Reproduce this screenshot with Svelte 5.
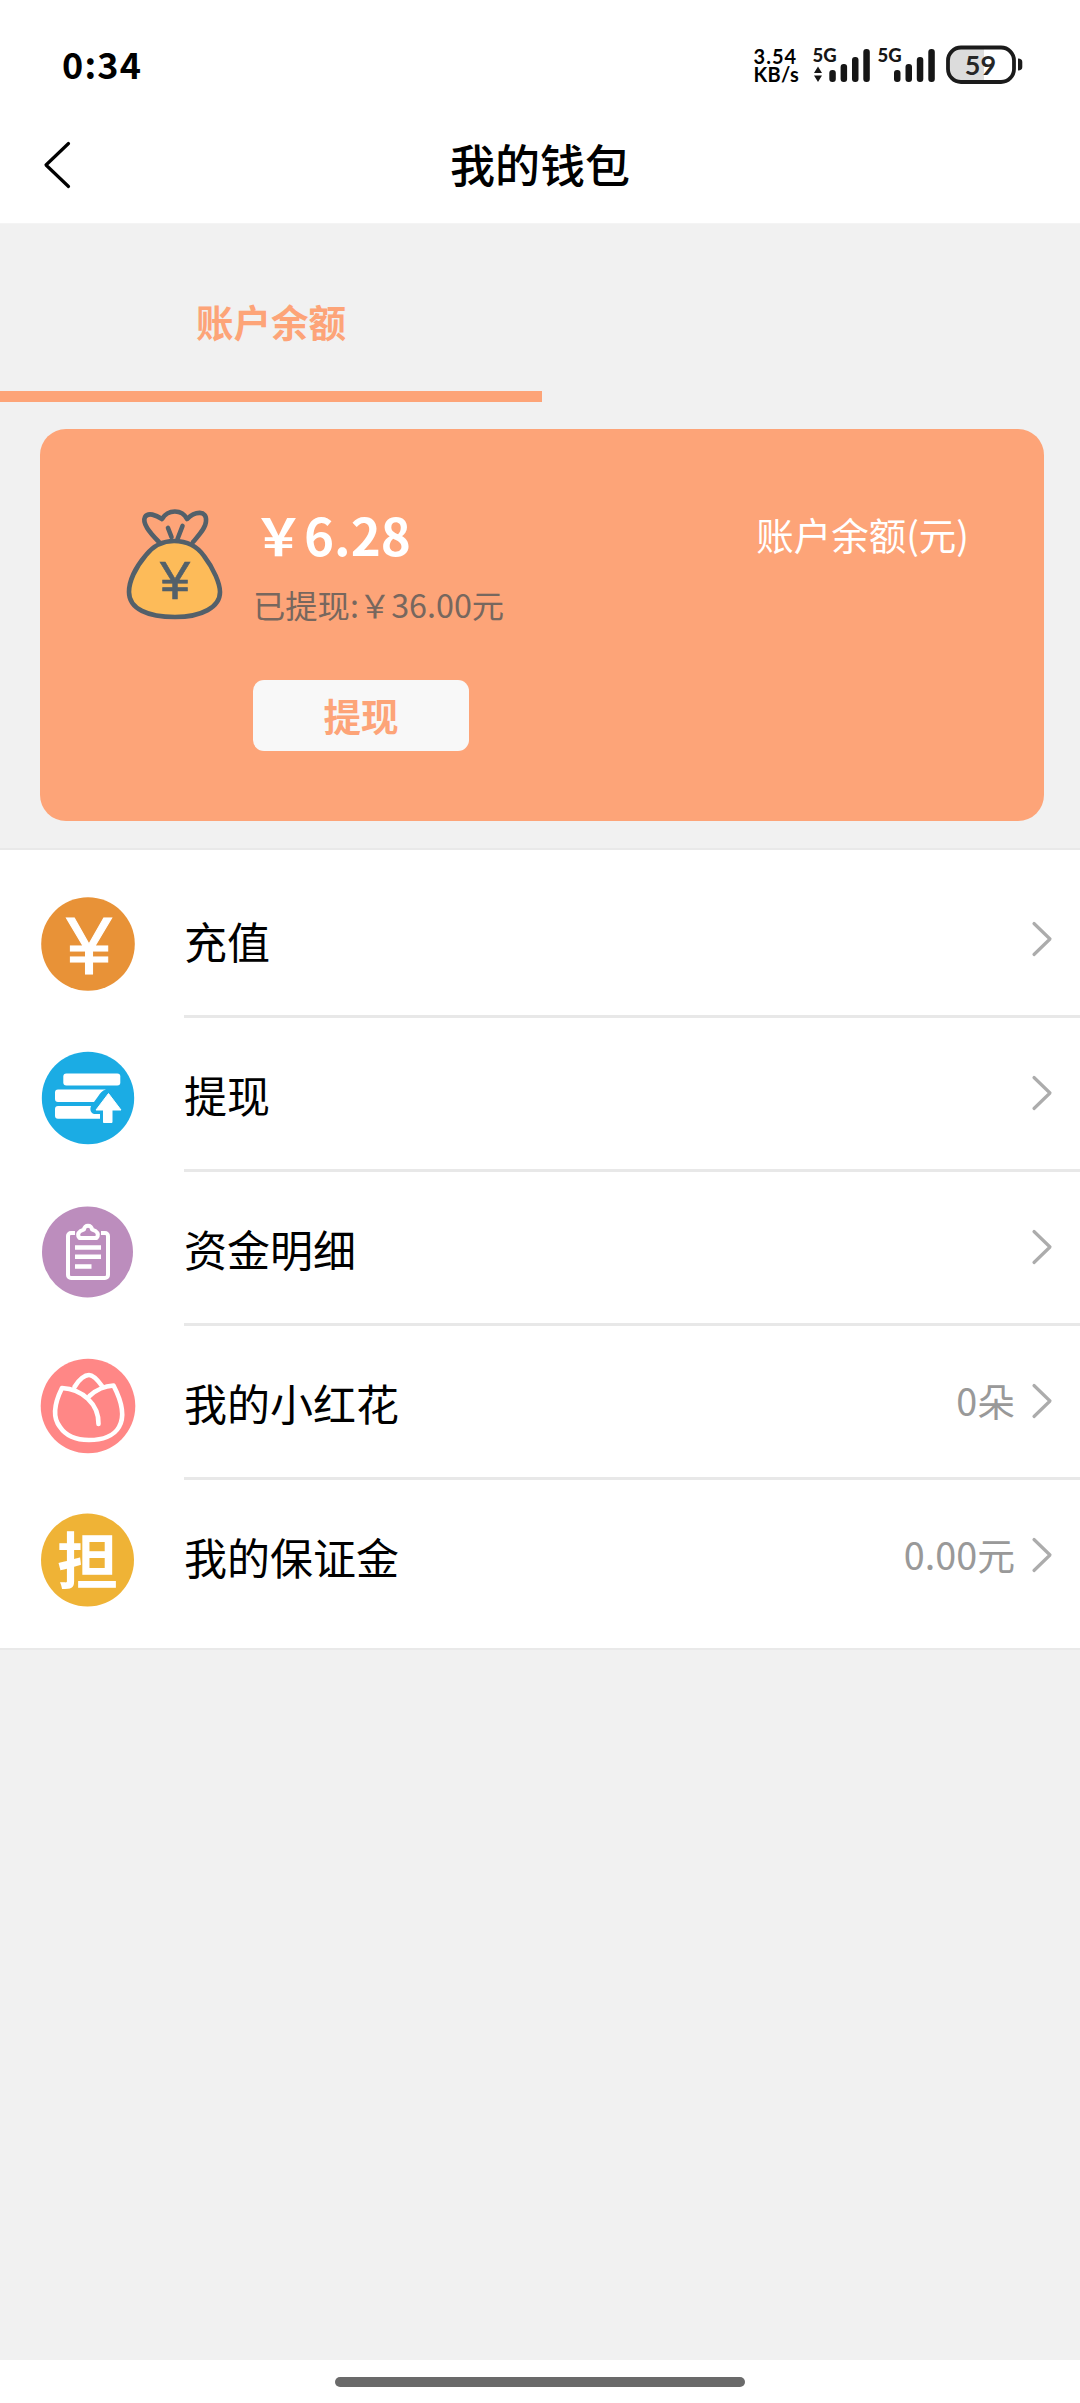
<script>

let balance = '6.28'
let withdrawn = '36.00'

let menu = [
  { icon: 'recharge', name: '充值', value: '' },
  { icon: 'withdraw', name: '提现', value: '' },
  { icon: 'detail', name: '资金明细', value: '' },
  { icon: 'flower', name: '我的小红花', value: '0朵' },
  { icon: 'deposit', name: '我的保证金', value: '0.00元' }
]

</script>

<div class="page">

  <!--  status bar   -->

  <div class="status">
    <div class="time">0:34</div>
    <div class="speed">
      <span class="rate">3.54</span>
      <span>KB/s</span>
    </div>
    <svg class="signals" width="124" height="44" viewBox="0 -8 124 44">
      <g fill="#161616">
        <path d="M6 19.5l4 6.5H2zM2 28.5h8L6 35z" />
        <rect x="17.3" y="23" width="6.5" height="12" rx="3" />
        <rect x="28.6" y="17" width="6.5" height="18" rx="3" />
        <rect x="40" y="10" width="6.5" height="25" rx="3" />
        <rect x="51.3" y="2" width="6.5" height="33" rx="3" />
        <rect x="82" y="23" width="6.5" height="12" rx="3" />
        <rect x="93.5" y="17" width="6.5" height="18" rx="3" />
        <rect x="104.8" y="10" width="6.5" height="25" rx="3" />
        <rect x="116.3" y="2" width="6.5" height="33" rx="3" />
        <text class="net" x="0.5" y="15">5G</text>
        <text class="net" x="65.5" y="15">5G</text>
      </g>
    </svg>
    <svg class="battery" width="78" height="40" viewBox="0 0 78 40">
      <path d="M14 4h24v32H14A10 10 0 0 1 4 26V14A10 10 0 0 1 14 4z" fill="#dcdcdc" />
      <rect x="2" y="2.500" width="66" height="34.500" rx="13" fill="none" stroke="#1b1b1b" stroke-width="3.8" />
      <path d="M72 13.5c3 0 4.300 1.500 4.300 3.500v5c0 2-1.300 3.500-4.300 3.500z" fill="#1b1b1b" />
      <text class="level" x="34.5" y="30" text-anchor="middle">59</text>
    </svg>
  </div>

  <!--  title bar   -->

  <div class="header">
    <svg class="back" width="30" height="50" viewBox="0 0 30 50">
      <path d="M25.500 3.500L3 25l22.500 21.500" fill="none" stroke="#000" stroke-width="3.200" stroke-linecap="round" stroke-linejoin="round" />
    </svg>
    <h1>我的钱包</h1>
  </div>

  <!--  balance   -->

  <div class="tabs">
    <div class="tab">账户余额</div>
  </div>

  <div class="card">
    <svg class="bag" width="100" height="114" viewBox="0 0 100 114">
      <g stroke="#53606a" stroke-width="4.600" stroke-linecap="round" stroke-linejoin="round">
        <path d="M34 34C24 24 17 15 20 9C23 4 31 7 37 11C43 1 57 1 62 11C70 3 82 2 81 13C81 20 73 28 68 34" fill="none" />
        <path d="M49 33C38 33 29 37 21 47C10 60 4 74 4 84C4 101 23 109 50 109C77 109 95 99 95 84C95 76 89 61 79 48C72 38 62 33 49 33Z" fill="#fdbb59" />
        <path d="M43 20l3.500 9M57.500 18l-5 13" fill="none" />
      </g>
      <text class="bag-yen" x="50" y="91" text-anchor="middle">¥</text>
    </svg>
    <div class="info">
      <div class="amount">￥{balance}</div>
      <div class="withdrawn">已提现:￥{withdrawn}元</div>
      <button class="cash">提现</button>
    </div>
    <div class="label">账户余额(元)</div>
  </div>

  <!--  menu   -->

  <div class="menu">
    {#each menu as item}
      <div class="row">
        <svg class="icon" width="96" height="96" viewBox="0 0 96 96">
          {#if item.icon === 'recharge'}
            <circle cx="48" cy="48" r="46.800" fill="#e89237" />
            <text class="yen" x="49" y="78" text-anchor="middle">¥</text>
          {:else if item.icon === 'withdraw'}
            <circle cx="48" cy="48" r="46.200" fill="#1bace4" />
            <g fill="#fff">
              <rect x="23.300" y="23.500" width="57" height="12" rx="3" />
              <path d="M18 39.500h48c-4 1-6 4-8 7l-4 5.500H18a3 3 0 0 1-3-3v-6.500a3 3 0 0 1 3-3z" />
              <path d="M18 56h33c-1.500 4 0 7 3 8h6v4.700H18a3 3 0 0 1-3-3V59a3 3 0 0 1 3-3z" />
              <path d="M68.500 43.500L81 60h-9v12.500h-8.500V60h-7.500z" stroke="#fff" stroke-width="1" stroke-linejoin="round" />
            </g>
          {:else if item.icon === 'detail'}
            <circle cx="47.500" cy="48" r="45.500" fill="#bc8dbd" />
            <g fill="none" stroke="#fff" stroke-width="4" stroke-linejoin="round">
              <path d="M35 29h-4a3 3 0 0 0-3 3v39a3 3 0 0 0 3 3h34a3 3 0 0 0 3-3V32a3 3 0 0 0-3-3h-4" />
              <path d="M39.500 34h17q3-4-1-7l-3.500-1.500c0-5-8-5-8 0L40.500 27q-4 3-1 7z" />
              <path d="M35 43.500h26M35 52.800h26M35 62.500h16.500" stroke-width="4.400" />
            </g>
          {:else if item.icon === 'flower'}
            <circle cx="48" cy="48" r="47.300" fill="#ff8786" />
            <g fill="none" stroke="#fff" stroke-width="4.600" stroke-linecap="round" stroke-linejoin="round">
              <path d="M58.500 66C59 46 42 31 22 30C14 46 12 59 20 69C26 78 36 82 49 82C62 82 74 78 79 69C86 57 80 40 73.500 27.500C65 28 56 32 49.500 38" />
              <path d="M34.500 29C39 21 45 17 49 17C53 17 57 21 62 28" />
            </g>
          {:else}
            <circle cx="47.500" cy="48" r="46.500" fill="#efb336" />
            <text class="dan" x="47.500" y="72" text-anchor="middle">担</text>
          {/if}
        </svg>
        <div class="line">
          <div class="name">{item.name}</div>
          <div class="value">{item.value}</div>
          <svg class="arrow" width="22" height="38" viewBox="0 0 22 38">
            <path d="M3 3.500L19 19L3 34.500" fill="none" stroke="#acacac" stroke-width="3.200" stroke-linecap="round" stroke-linejoin="round" />
          </svg>
        </div>
      </div>
    {/each}
  </div>

  <div class="nav"><div class="pill"></div></div>

</div>

<style>

  :global(body) {
    margin: 0;
  }

  .page {
    display: flex;
    flex-direction: column;
    width: 1080px;
    height: 2403px;
    background: #f1f1f1;
    font-family: "Noto Sans CJK SC", sans-serif;
    color: #000;
    overflow: hidden;
  }

  .status {
    display: flex;
    align-items: flex-start;
    height: 110px;
    padding: 45px 56px 0 62px;
    box-sizing: border-box;
    background: #fff;
  }

  .time {
    margin-right: auto;
    font-size: 36px;
    font-weight: 700;
    line-height: 36px;
    letter-spacing: 1.2px;
  }

  .speed {
    display: flex;
    flex-direction: column;
    margin: 2px 13px 0 0;
    font-family: Lato, sans-serif;
    font-size: 20px;
    font-weight: 700;
    line-height: 18px;
    letter-spacing: 0.3px;
  }

  .rate {
    letter-spacing: 1px;
  }

  .signals {
    margin: -6px 10px 0 0;
  }

  .net {
    font-family: Lato, sans-serif;
    font-size: 18.5px;
    font-weight: 900;
  }

  .level {
    font-family: Lato, sans-serif;
    font-size: 27px;
    font-weight: 700;
    fill: #262626;
  }

  .header {
    display: grid;
    grid-template-columns: 73px 1fr 73px;
    align-items: center;
    height: 114px;
    padding-bottom: 4px;
    background: #fff;
    border-bottom: 1px solid #f4f4f4;
    box-sizing: border-box;
  }

  .back {
    justify-self: end;
  }

  h1 {
    margin: 0 0 2px;
    text-align: center;
    font-size: 45px;
    font-weight: 500;
    line-height: 60px;
  }

  .tabs {
    display: flex;
    height: 178px;
  }

  .tab {
    width: 542px;
    border-bottom: 11px solid #fda478;
    box-sizing: border-box;
    line-height: 193px;
    text-align: center;
    font-size: 37.5px;
    font-weight: 700;
    color: #fda478;
  }

  .card {
    display: flex;
    align-items: flex-start;
    width: 1004px;
    height: 392px;
    margin: 27px 0 27px 40px;
    padding: 79px 75px 0 85px;
    box-sizing: border-box;
    border-radius: 26px;
    background: #fda478;
  }

  .info {
    margin-left: 28px;
  }

  .amount {
    height: 60px;
    line-height: 52px;
    font-size: 51px;
    font-weight: 700;
    color: #fff;
  }

  .withdrawn {
    height: 112px;
    line-height: 73px;
    font-size: 32.3px;
    color: #77675e;
  }

  .cash {
    display: block;
    width: 216px;
    height: 71px;
    padding: 0 0 3px;
    border: none;
    border-radius: 11px;
    background: #f8f8f8;
    font-family: inherit;
    font-size: 37.5px;
    font-weight: 700;
    color: #fda478;
  }

  .label {
    margin-left: auto;
    line-height: 52px;
    font-size: 37.5px;
    color: #fff;
  }

  .bag-yen {
    font-family: "Liberation Sans", sans-serif;
    font-size: 54px;
    fill: #53606a;
    stroke: #53606a;
    stroke-width: 0.6px;
  }

  .menu {
    padding: 14px 0;
    background: #fff;
    border-top: 2px solid #e9e9e9;
    border-bottom: 2px solid #e9e9e9;
  }

  .row {
    display: flex;
    height: 154px;
  }

  .icon {
    margin: 31.5px 48.5px 0 39.5px;
  }

  .yen {
    font-family: "Liberation Sans", sans-serif;
    font-size: 81px;
    fill: #fff;
    stroke: #fff;
    stroke-width: 1px;
  }

  .dan {
    font-size: 61px;
    font-weight: 700;
    fill: #fff;
  }

  .line {
    display: flex;
    align-items: center;
    flex: 1;
    padding-right: 27px;
    border-bottom: 3px solid #e8e8e8;
  }

  .row:last-child .line {
    border-bottom-color: transparent;
  }

  .name {
    flex: 1;
    font-size: 43px;
  }

  .value {
    padding-bottom: 5px;
    margin-right: 16px;
    font-size: 37.8px;
    color: #999;
  }

  .arrow {
    margin-bottom: 2px;
  }

  .nav {
    display: flex;
    justify-content: center;
    height: 43px;
    margin-top: auto;
    background: #fff;
  }

  .pill {
    width: 410px;
    height: 10px;
    margin-top: 17px;
    border-radius: 5px;
    background: #6a6a6a;
  }

</style>
